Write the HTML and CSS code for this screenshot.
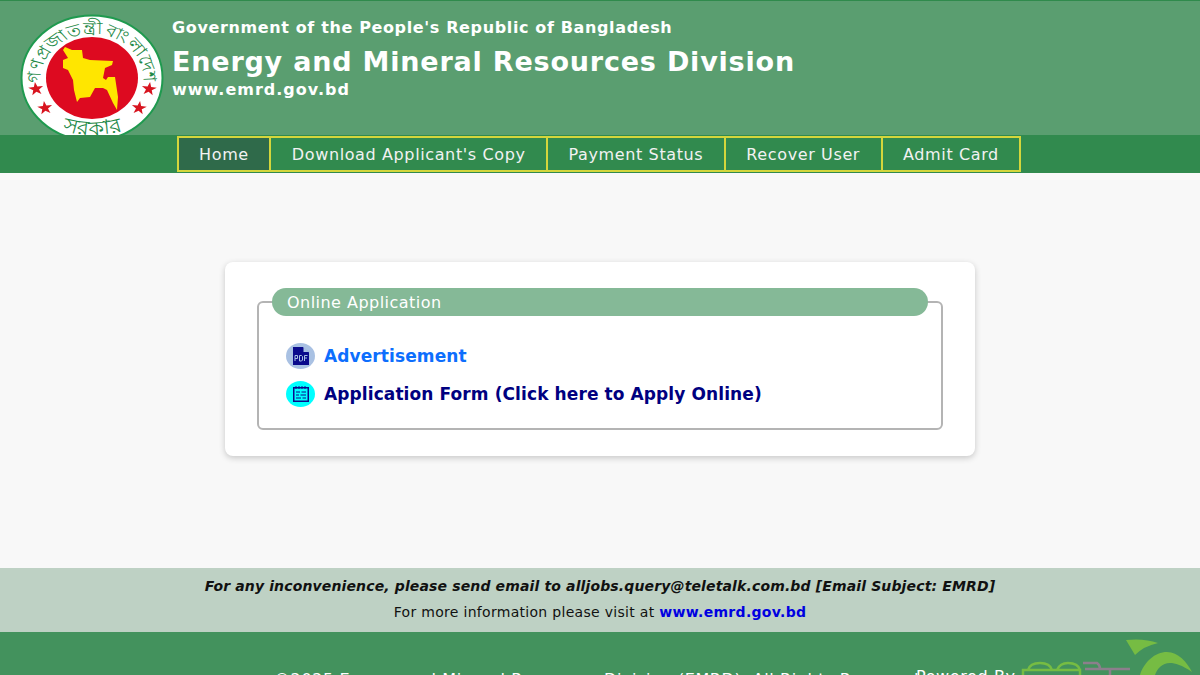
FILE: index.html
```html
<!DOCTYPE html>
<html lang="en">
<head>
    <meta charset="UTF-8">
    <meta name="viewport" content="width=device-width, initial-scale=1.0">
    <title>Energy and Mineral Resources Division</title>
    <link rel="stylesheet" href="styles.css">
</head>
<body>

<!-- Header -->
<header class="banner">
    <svg class="seal" width="144" height="126" viewBox="0 0 144 126">
        <defs>
            <path id="sealTop" d="M 18.300 66 A 46 46 0 1 1 110.300 66"></path>
            <path id="sealBottom" d="M 30 114 Q 64 128 99 114"></path>
            <polygon id="star" points="0,-7 1.600,-2.200 6.700,-2.200 2.600,0.800 4.100,5.700 0,2.700 -4.100,5.700 -2.600,0.800 -6.700,-2.200 -1.600,-2.200"></polygon>
        </defs>
        <ellipse cx="72" cy="64" rx="70.500" ry="62.500" fill="#fff" stroke="#1f9a4f" stroke-width="2"></ellipse>
        <ellipse cx="72" cy="64" rx="46" ry="41" fill="#dd0a20"></ellipse>
        <g transform="scale(1.12 1)">
            <text class="seal-text"><textPath href="#sealTop" startOffset="50%" text-anchor="middle">গণপ্রজাতন্ত্রী বাংলাদেশ</textPath></text>
            <text class="seal-text seal-text-big"><textPath href="#sealBottom" startOffset="50%" text-anchor="middle">সরকার</textPath></text>
        </g>
        <polygon transform="translate(-20 -14)" fill="#ffe600" points="65,47 72,50 82,50 83,58 90,60 113,61 112,65 105,68 103,78 106,80 108,77 115,77 118,97 117,110 113,103 107,90 103,88 95,88 90,97 80,98 77,102 74,90 73,80 68,70 63,68 63,60 68,58 63,50"></polygon>
        <use href="#star" fill="#d8141f" transform="translate(16 75) scale(1.12 1) rotate(-8)"></use>
        <use href="#star" fill="#d8141f" transform="translate(25 94) scale(1.12 1) rotate(-8)"></use>
        <use href="#star" fill="#d8141f" transform="translate(129 75) scale(1.12 1) rotate(8)"></use>
        <use href="#star" fill="#d8141f" transform="translate(119 94) scale(1.12 1) rotate(8)"></use>
    </svg>
    <div class="banner-text">
        <div class="gov-line">Government of the People's Republic of Bangladesh</div>
        <h1 class="org-name">Energy and Mineral Resources Division</h1>
        <div class="site-line">www.emrd.gov.bd</div>
    </div>
</header>

<!-- Navigation -->
<nav class="menu">
    <a class="menu-item active" href="#">Home</a>
    <a class="menu-item" href="#">Download Applicant's Copy</a>
    <a class="menu-item" href="#">Payment Status</a>
    <a class="menu-item" href="#">Recover User</a>
    <a class="menu-item" href="#">Admit Card</a>
</nav>

<!-- Main card -->
<main class="content">
    <div class="card">
        <div class="panel">
            <div class="panel-title">Online Application</div>
            <a class="link-row link-advert" href="#">
                <span class="round-icon round-blue">
                    <svg width="16" height="18" viewBox="0 0 16 18">
                        <path d="M0 0 H10 L16 5.500 V18 H0 Z" fill="#0a0a8c"></path>
                        <path d="M10.500 0 L16 5 H10.500 Z" fill="#a9c1e3"></path>
                        <path d="M2 14 V8.500 H4.500 V11.500 H2 M6.500 8.500 V14 H8.500 L9.500 13 V9.500 L8.500 8.500 H6.500 M11.500 14 V8.500 H14.500 M11.500 11 H14" fill="none" stroke="#a9c1e3" stroke-width="1"></path>
                    </svg>
                </span>
                Advertisement
            </a>
            <a class="link-row link-form" href="#">
                <span class="round-icon round-cyan">
                    <svg width="16" height="16" viewBox="0 0 16 16" fill="none" stroke="#0a0a8c">
                        <rect x="0.750" y="1.750" width="14.500" height="13.500" stroke-width="1.500"></rect>
                        <path d="M3 0 V3 M6 0 V3 M9 0 V3 M12 0 V3" stroke-width="1"></path>
                        <path d="M3 6 H7 M8.500 6 H13 M3 9 H6 M7.500 9 H13 M3 12 H8 M9.500 12 H13" stroke-width="1.200"></path>
                    </svg>
                </span>
                Application Form (Click here to Apply Online)
            </a>
        </div>
    </div>
</main>

<!-- Contact strip -->
<section class="contact">
    <div class="contact-mail">For any inconvenience, please send email to alljobs.query@teletalk.com.bd [Email Subject: EMRD]</div>
    <div class="contact-more">For more information please visit at <a href="#">www.emrd.gov.bd</a></div>
</section>

<!-- Footer -->
<footer class="footer">
    <div class="copyright">©2025 Energy and Mineral Resources Division (EMRD), All Rights Reserved.</div>
    <div class="powered">Powered By</div>
    <svg class="teletalk" width="180" height="43" viewBox="0 0 180 43">
        <path d="M106 8 Q124 6 138 11 Q124 14 115 23 Z" fill="#76bc43"></path>
        <path d="M120 43 C124 30 135 20 147 20 C158 20 167 30 172 40 C162 33 155 31 150 31 C142 31 137 37 135 43 Z" fill="#76bc43"></path>
        <path d="M3 43 V38 H60 V43 M8 38 Q10 31 20 31 Q30 31 32 38 M37 38 Q40 31 48 31 Q58 31 60 38" fill="none" stroke="#76bc43" stroke-width="2.500"></path>
        <path d="M63 31 H77 Q80 33 80 37 M65 37 H110 M90 37 V43" fill="none" stroke="#8c7f8c" stroke-width="2.500"></path>
    </svg>
</footer>

</body>
</html>
```

FILE: styles.css
```css
body {
    margin: 0;
    font-family: "DejaVu Sans", Verdana, sans-serif;
    background: #f8f8f8;
    color: #111;
}

a {
    text-decoration: none;
}

/* Header */
.banner {
    height: 135px;
    box-sizing: border-box;
    border-top: 1px solid #2f8a4c;
    background: #5a9e70;
    display: flex;
    color: #fff;
    overflow: hidden;
}

.seal {
    flex: none;
    margin: 13px 0 0 20px;
}

.seal-text {
    font-family: "Noto Sans", "DejaVu Sans", sans-serif;
    font-size: 16.500px;
    font-weight: 500;
    word-spacing: -3px;
    fill: #1f8a48;
}

.seal-text-big {
    font-size: 20px;
}

.banner-text {
    margin-left: 8px;
    padding-top: 17px;
}

.gov-line,
.site-line {
    font-size: 16px;
    font-weight: bold;
    line-height: 20px;
    letter-spacing: 0.63px;
}

.site-line {
    letter-spacing: 1px;
}

.org-name {
    margin: 6px 0 0;
    font-size: 27px;
    line-height: 36px;
    font-weight: bold;
    letter-spacing: 0.8px;
}

/* Navigation */
.menu {
    height: 38px;
    box-sizing: border-box;
    background: #318a4e;
    display: flex;
    justify-content: center;
    padding-top: 1px;
}

.menu-item {
    height: 36px;
    box-sizing: border-box;
    padding: 0 20.500px;
    margin-left: -2px;
    border: 2px solid #d4d63c;
    color: #f2f2f2;
    font-size: 16px;
    line-height: 34px;
    letter-spacing: 0.62px;
}

.menu-item.active {
    background: #2f6a4a;
}

/* Main card */
.content {
    height: 395px;
    padding-top: 89px;
    box-sizing: border-box;
}

.card {
    width: 750px;
    height: 194px;
    box-sizing: border-box;
    margin: 0 auto;
    padding: 39px 32px 0;
    background: #fff;
    border-radius: 8px;
    box-shadow: 0 2px 6px rgba(0, 0, 0, 0.2);
}

.panel {
    position: relative;
    height: 129px;
    box-sizing: border-box;
    padding-top: 40px;
    border: 2px solid #b4b4b4;
    border-radius: 6px;
}

.panel-title {
    position: absolute;
    top: -15px;
    left: 13px;
    width: 656px;
    height: 28px;
    box-sizing: border-box;
    padding-left: 15px;
    border-radius: 14px;
    background: #85b997;
    color: #fff;
    font-size: 16px;
    line-height: 29px;
    letter-spacing: 0.47px;
}

.link-row {
    display: flex;
    align-items: center;
    gap: 9px;
    height: 26px;
    margin: 0 0 12px 27px;
    font-size: 17px;
    font-weight: bold;
    letter-spacing: 0.1px;
}

.link-advert {
    color: #0d6efd;
}

.link-form {
    color: #000080;
}

.round-icon {
    width: 29px;
    height: 26px;
    border-radius: 50%;
    display: flex;
    align-items: center;
    justify-content: center;
}

.round-blue {
    background: #a9c1e3;
}

.round-cyan {
    background: #00ffff;
}

/* Contact strip */
.contact {
    height: 64px;
    box-sizing: border-box;
    padding-top: 8px;
    background: #bed1c4;
    text-align: center;
    font-size: 14px;
}

.contact-mail {
    font-weight: bold;
    font-style: italic;
    line-height: 20px;
    letter-spacing: 0.14px;
}

.contact-more {
    margin-top: 6px;
    line-height: 20px;
    letter-spacing: 0.3px;
}

.contact-more a {
    color: #0000e0;
    font-weight: bold;
}

/* Footer */
.footer {
    position: relative;
    height: 43px;
    overflow: hidden;
    background: #43925d;
    color: #fff;
    font-size: 16px;
    letter-spacing: 0.6px;
}

.copyright {
    position: absolute;
    top: 38px;
    left: 274px;
    white-space: nowrap;
}

.powered {
    position: absolute;
    top: 35px;
    left: 916px;
    white-space: nowrap;
}

.teletalk {
    position: absolute;
    top: 0;
    left: 1020px;
}
```
